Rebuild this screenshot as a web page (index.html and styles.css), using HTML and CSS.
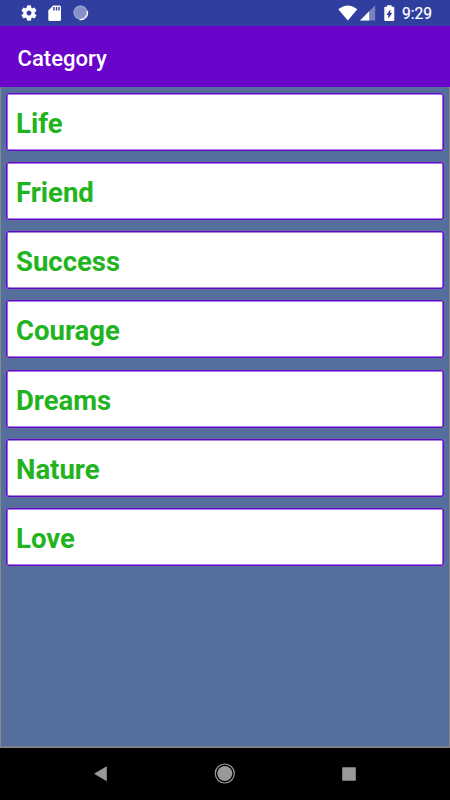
FILE: index.html
```html
<!DOCTYPE html>
<html lang="en">
<head>
    <meta charset="UTF-8">
    <meta name="viewport" content="width=device-width, initial-scale=1.0">
    <title>Category</title>
    <link rel="stylesheet" href="styles.css">
</head>
<body>
    <div class="status-bar">
        <svg class="icon-settings" width="18" height="18" viewBox="0 0 24 24">
            <path fill="#fff" stroke="#fff" stroke-width=".4" d="M19.43 12.98c.04-.32.07-.64.07-.98s-.03-.66-.07-.98l2.11-1.65c.19-.15.24-.42.12-.64l-2-3.46c-.12-.22-.39-.3-.61-.22l-2.49 1c-.52-.4-1.08-.73-1.69-.98l-.38-2.65C14.46 2.18 14.25 2 14 2h-4c-.25 0-.46.18-.49.42l-.38 2.65c-.61.25-1.17.59-1.69.98l-2.49-1c-.23-.09-.49 0-.61.22l-2 3.46c-.13.22-.07.49.12.64l2.11 1.65c-.04.32-.07.65-.07.98s.03.66.07.98l-2.11 1.65c-.19.15-.24.42-.12.64l2 3.46c.12.22.39.3.61.22l2.49-1c.52.4 1.08.73 1.69.98l.38 2.65c.03.24.24.42.49.42h4c.25 0 .46-.18.49-.42l.38-2.65c.61-.25 1.17-.59 1.69-.98l2.49 1c.23.09.49 0 .61-.22l2-3.46c.12-.22.07-.49-.12-.64l-2.11-1.65zM12 15.500c-1.930 0-3.500-1.570-3.500-3.500s1.570-3.500 3.500-3.500 3.500 1.570 3.500 3.500-1.570 3.500-3.500 3.500z"/>
        </svg>
        <svg class="icon-sd" width="14" height="17" viewBox="0 0 14 17">
            <path fill="#fff" d="M5.200.5H11.600Q13 .5 13 2V14.500Q13 16 11.600 16H1.700Q.3 16 .3 14.500V5.400z"/>
            <path fill="#303f9f" d="M5.200 2h1.400v3.500H5.200zM7.800 2h1.400v3.500H7.800zM10.300 2h1.400v3.500h-1.400z"/>
        </svg>
        <svg class="icon-sync" width="16" height="16" viewBox="0 0 16 16">
            <circle cx="7.500" cy="7.500" r="7" fill="#8790c8"/>
            <circle cx="7.500" cy="7.500" r="6.300" fill="none" stroke="#a5acd6" stroke-width="1.600" stroke-dasharray="1 1"/>
            <path d="M14.300 6A7 7 0 0 1 6.500 14.600" fill="none" stroke="#fff" stroke-width="1.300"/>
        </svg>
        <div class="status-right">
            <svg class="icon-wifi" width="20" height="16" viewBox="0 0 20 16">
                <path fill="#fff" d="M.3 4.300Q9.800-3.300 19.300 4.300L9.800 15.600z"/>
            </svg>
            <svg class="icon-signal" width="16" height="16" viewBox="0 0 16 16">
                <path fill="#fff" fill-opacity=".35" d="M15.200.2V15.500H0z"/>
                <path fill="#fff" d="M9.200 6.200V15.500H0z"/>
            </svg>
            <svg class="icon-battery" width="11" height="17" viewBox="0 0 11 17">
                <path fill="#fff" d="M3 .3h4.600v1.500h1.700q1 0 1 1V15q0 1-1 1H1.300q-1 0-1-1V2.800q0-1 1-1H3z"/>
                <path fill="#303f9f" d="M6.300 4.300V8H8.200L4.300 13.700V9.900H2.500z"/>
            </svg>
            <span class="clock">9:29</span>
        </div>
    </div>

    <header class="app-bar">
        <h1>Category</h1>
    </header>

    <main class="content">
        <ul class="category-list">
            <li>Life</li>
            <li>Friend</li>
            <li>Success</li>
            <li>Courage</li>
            <li>Dreams</li>
            <li>Nature</li>
            <li>Love</li>
        </ul>
    </main>

    <nav class="nav-bar">
        <svg width="450" height="52" viewBox="0 0 450 52" fill="#999">
            <path d="M94 25.700L106.800 18.200V33.200z"/>
            <circle cx="224.800" cy="25.500" r="7.500"/>
            <circle cx="224.800" cy="25.500" r="9.500" fill="none" stroke="#999" stroke-width="1.200"/>
            <rect x="342.200" y="19.200" width="13.600" height="13.600" rx=".5"/>
        </svg>
    </nav>
</body>
</html>
```

FILE: styles.css
```css
body {
    margin: 0;
    width: 450px;
    height: 800px;
    display: flex;
    flex-direction: column;
    font-family: Roboto, sans-serif;
    background-color: #000;
    overflow: hidden;
}

svg {
    display: block;
    flex: none;
}

.status-bar {
    height: 26px;
    display: flex;
    align-items: center;
    padding: 0 18px 0 19.5px;
    background-color: #303f9f;
}

.icon-sd {
    margin-left: 10.5px;
}

.icon-sync {
    margin-left: 11px;
}

.status-right {
    margin-left: auto;
    display: flex;
    align-items: center;
}

.icon-signal {
    margin-left: 2px;
}

.icon-battery {
    margin-left: 8px;
}

.clock {
    margin-left: 7px;
    padding-top: 1px;
    color: #fff;
    font-size: 15.6px;
    font-weight: 400;
    line-height: 18px;
    -webkit-text-stroke: 0.2px #fff;
}

.app-bar {
    height: 61px;
    box-sizing: border-box;
    display: flex;
    align-items: center;
    padding: 2px 0 0 17.5px;
    background-color: #6a04cb;
}

.app-bar h1 {
    margin: 0;
    color: #fff;
    font-size: 22.1px;
    font-weight: 500;
}

.content {
    height: 661px;
    box-sizing: border-box;
    padding: 6px 5px 0;
    border: 1px solid #888;
    border-width: 0 1px 1px;
    box-shadow: inset 0 -1px #737b91;
    background-color: #566e9b;
}

.category-list {
    display: flex;
    flex-direction: column;
    gap: 11.15px;
    margin: 0;
    padding: 0;
    list-style: none;
}

.category-list li {
    height: 58px;
    box-sizing: border-box;
    display: flex;
    align-items: center;
    padding: 3px 0 0 9px;
    border: 1px solid #6406cd;
    border-radius: 3px;
    box-shadow: inset 0 0 0 0.6px #6406cd;
    background-color: #fff;
    color: #22b41e;
    font-size: 27.5px;
    font-weight: 700;
}

.nav-bar {
    height: 52px;
    background-color: #000;
}
```
